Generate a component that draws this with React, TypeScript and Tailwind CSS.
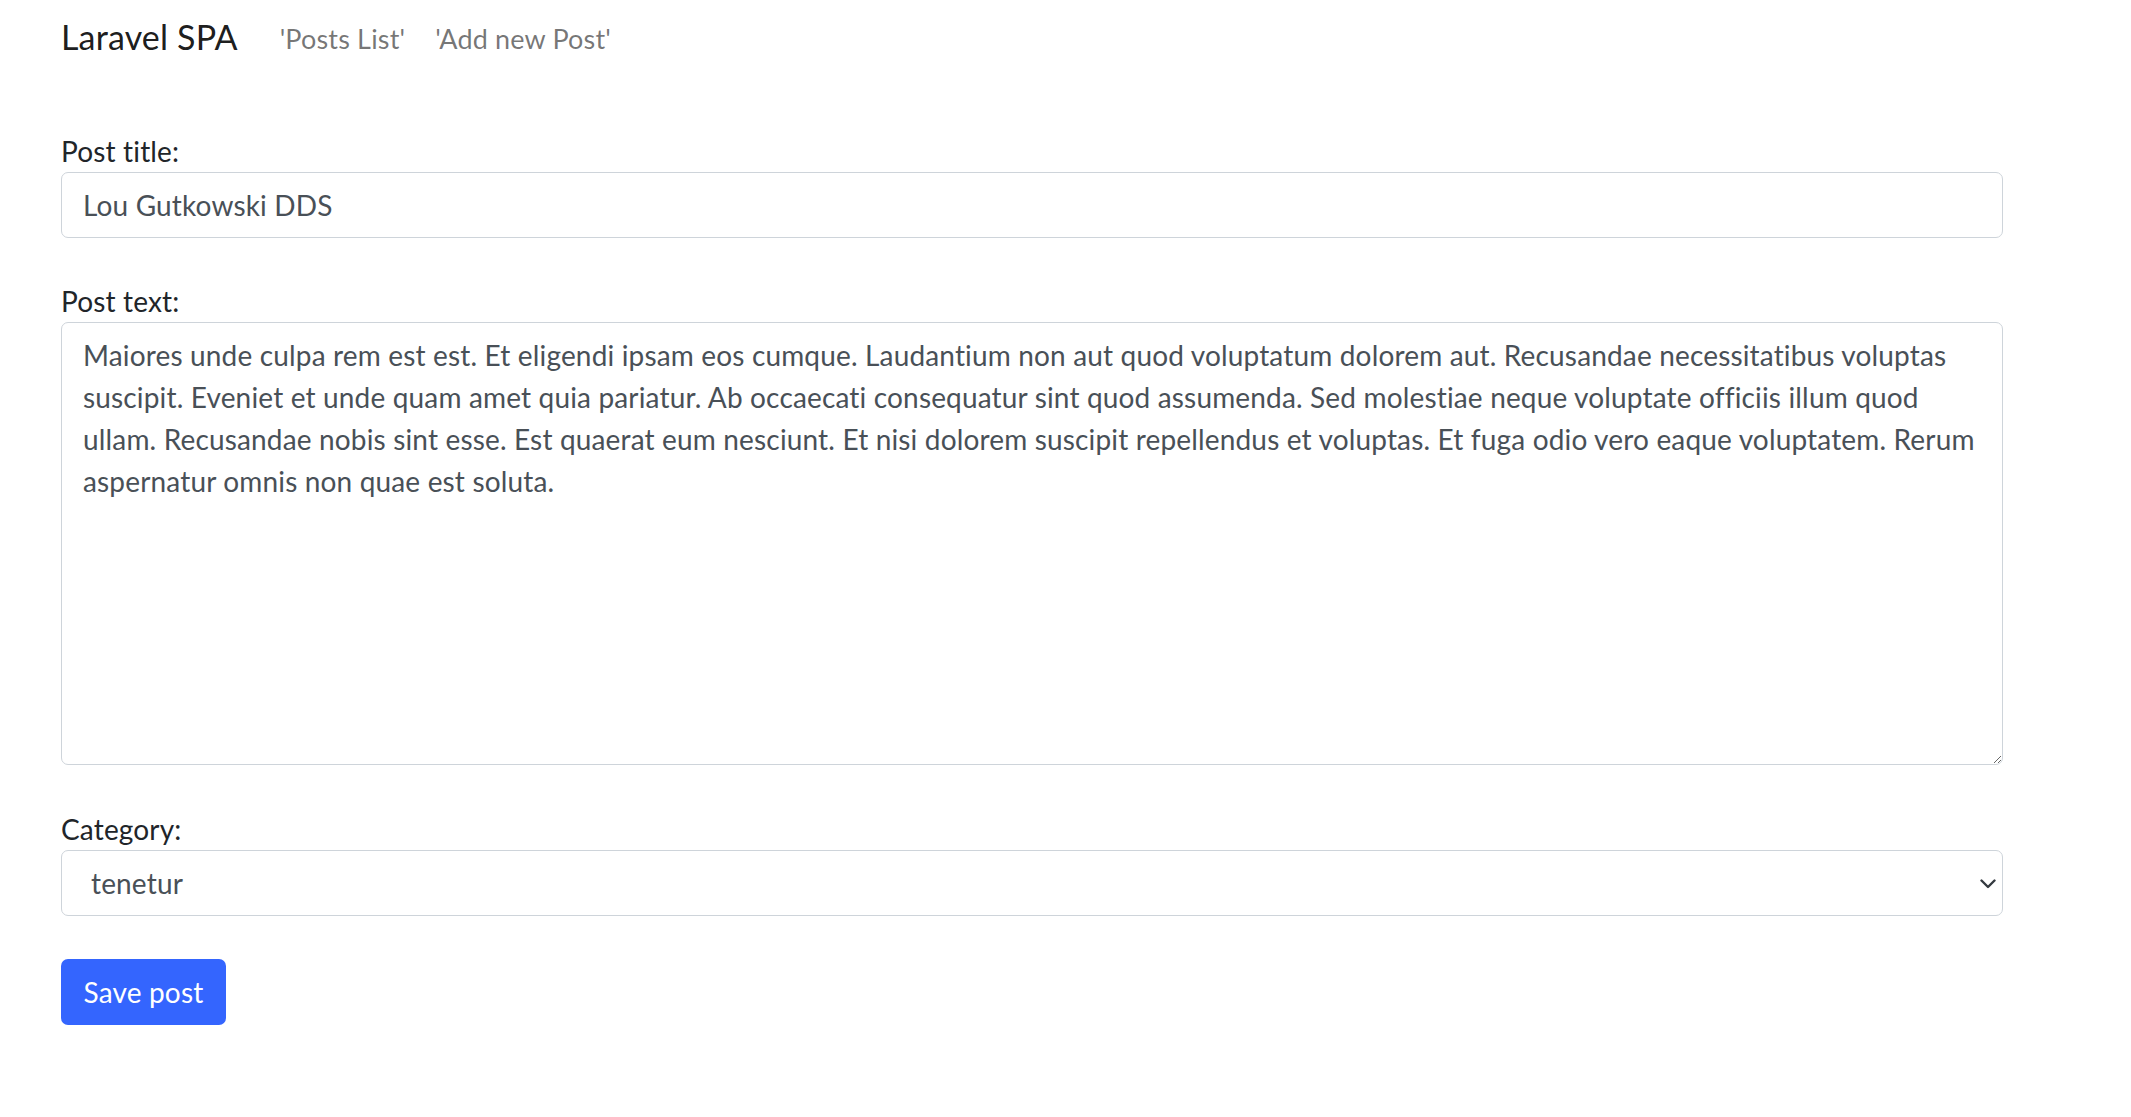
const postText = "Maiores unde culpa rem est est. Et eligendi ipsam eos cumque. Laudantium non aut quod voluptatum dolorem aut. Recusandae necessitatibus voluptas suscipit. Eveniet et unde quam amet quia pariatur. Ab occaecati consequatur sint quod assumenda. Sed molestiae neque voluptate officiis illum quod ullam. Recusandae nobis sint esse. Est quaerat eum nesciunt. Et nisi dolorem suscipit repellendus et voluptas. Et fuga odio vero eaque voluptatem. Rerum aspernatur omnis non quae est soluta.";

function Navbar() {
    return <nav className="h-[78px] flex items-center pl-[61px]">
        <a className="text-[34px] leading-[1.5] text-black/90 mr-[42px] mb-[5px]">Laravel SPA</a>
        <a className="text-[27px] leading-[1.5] text-black/55 mr-[30px]">'Posts List'</a>
        <a className="text-[27px] leading-[1.5] text-black/55">'Add new Post'</a>
    </nav>
}

export default function App() {
    return <div className="min-h-screen bg-white font-['Lato',sans-serif] tracking-[0.16px] text-[#212529]">
        <Navbar />
        <form className="mt-[52px] pl-[61px] w-[2003px]" onSubmit={e => e.preventDefault()}>
            <div className="mb-[42px]">
                <label className="block text-[28px] leading-[42px]">Post title:</label>
                <input
                    type="text"
                    readOnly
                    value="Lou Gutkowski DDS"
                    className="block w-full h-[66px] px-[21px] text-[28px] text-[#495057] bg-white border border-[#ced4da] rounded-[7px] outline-none"
                />
            </div>
            <div className="mb-[43px]">
                <label className="block text-[28px] leading-[42px]">Post text:</label>
                <textarea
                    readOnly
                    value={postText}
                    className="block w-full h-[443px] pt-[11px] px-[21px] text-[28px] leading-[42px] text-[#495057] bg-white border border-[#ced4da] rounded-[7px] outline-none"
                />
            </div>
            <div className="mb-[43px]">
                <label className="block text-[28px] leading-[42px]">Category:</label>
                <div className="relative">
                    <select
                        defaultValue="tenetur"
                        className="block w-full h-[66px] pl-[29px] pr-[60px] text-[28px] text-[#495057] bg-white border border-[#ced4da] rounded-[7px] outline-none appearance-none"
                    >
                        <option value="tenetur">tenetur</option>
                    </select>
                    <svg className="absolute right-[7px] top-[29px] pointer-events-none" width="16" height="10" viewBox="0 0 16 10" fill="none">
                        <path d="M1.5 1.5 L8 8 L14.5 1.5" stroke="#343a40" strokeWidth="2.4" strokeLinecap="round" strokeLinejoin="round" />
                    </svg>
                </div>
            </div>
            <button
                type="submit"
                className="h-[66px] w-[165px] text-[28px] text-white bg-[#3465fe] rounded-[7px]"
            >
                Save post
            </button>
        </form>
    </div>
}
